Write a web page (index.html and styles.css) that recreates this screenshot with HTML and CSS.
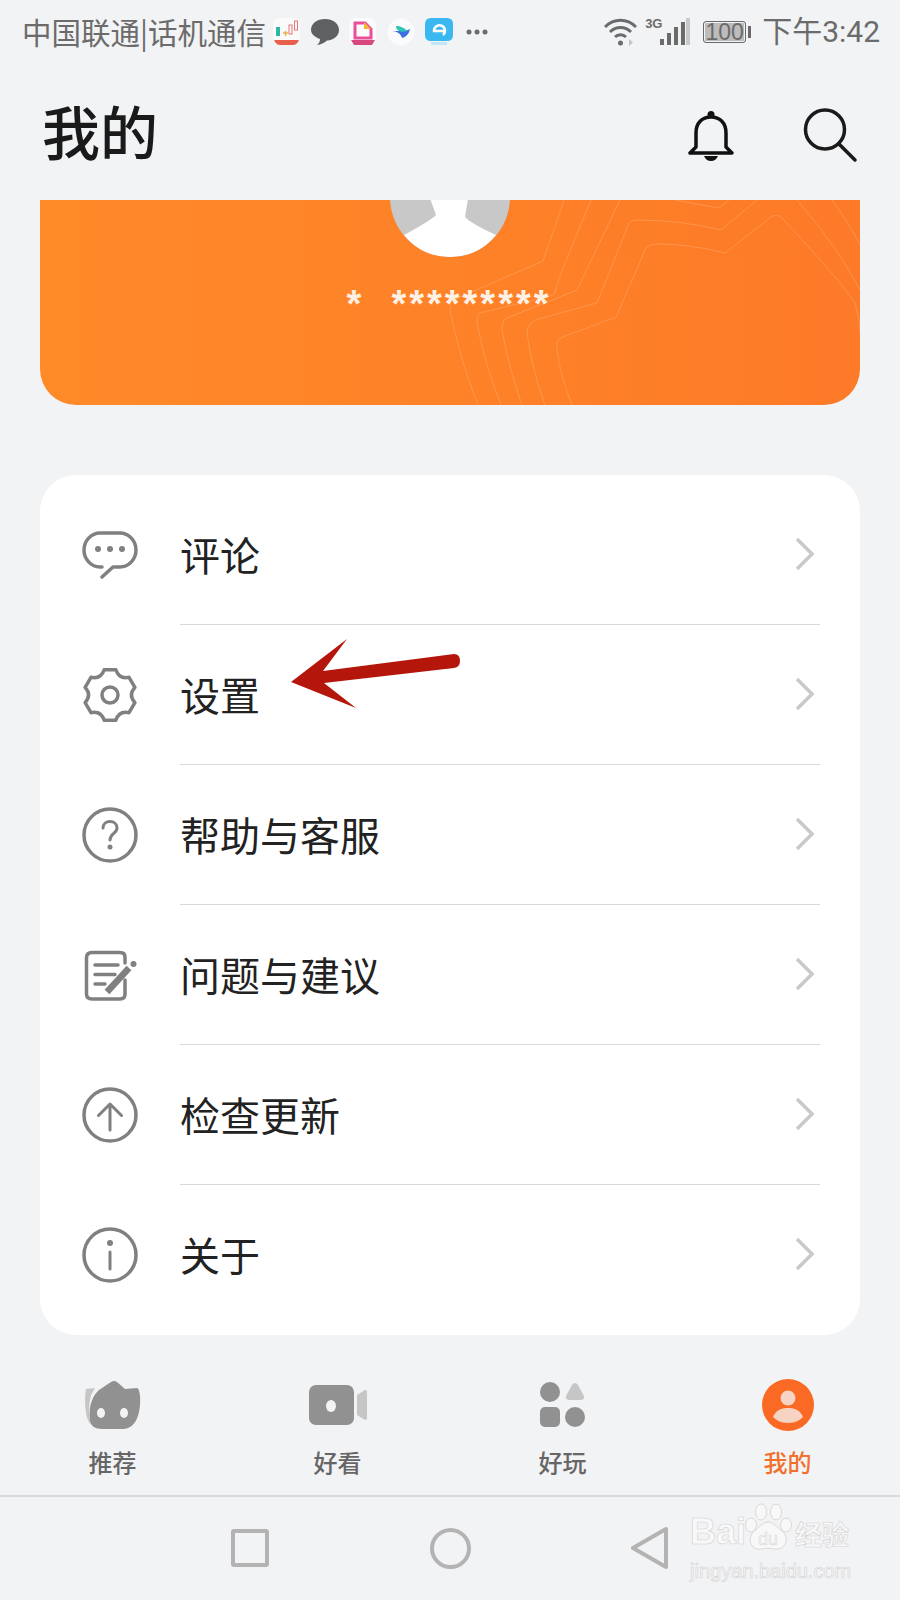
FILE: index.html
```html
<!DOCTYPE html>
<html lang="zh-CN">
<head>
    <meta charset="UTF-8">
    <title>我的</title>
    <link rel="stylesheet" href="styles.css">
</head>
<body>
<div class="page">

    <div class="status-bar">
        <span class="carrier">中国联通|话机通信</span>
        <div class="notify-icons">
            <svg width="28" height="28" viewBox="0 0 28 28"><rect width="27" height="27" rx="6" fill="#fafafa"/><rect x="3" y="9" width="4" height="9" fill="#2fb7a5"/><path d="M10 15h5M12.500 13v5" stroke="#e9b24c" stroke-width="1.500"/><rect x="16" y="7" width="3" height="9" fill="none" stroke="#e57878"/><rect x="21.500" y="3" width="3" height="9" fill="none" stroke="#e57878"/><path d="M1 22h25q-2 5-6 5H7q-4 0-6-5z" fill="#e8604c"/></svg>
            <svg width="28" height="28" viewBox="0 0 28 28"><path d="M14 1c8 0 14 4.500 14 11 0 6-5 10-12 10.500-3 2.500-6 4-10 4.500 2-1.500 3-3.500 3-6C3.500 19 0 16 0 12 0 5.500 6 1 14 1z" fill="#5f6062"/></svg>
            <svg width="28" height="28" viewBox="0 0 28 28"><rect width="27" height="27" rx="7" fill="#fbfbfb"/><path d="M6 5h10l6 6v9H6z" fill="none" stroke="#ea4f9a" stroke-width="3"/><path d="M15 4l7 7h-7z" fill="#f2b63a"/><path d="M2 22h24l-3 5H5z" fill="#d7487e"/></svg>
            <svg width="28" height="28" viewBox="0 0 28 28"><circle cx="14" cy="14" r="13.500" fill="#fbfbfb"/><path d="M5 13c5 0 9 3 10 7 4-1 7-4 8-9-4 2-7 2-9 2-3 0-6 0-9 0z" fill="#3c6fe0"/><path d="M9 8c4 0 9 2 11 5-3 1-6 1-8 0-2-1-3-3-3-5z" fill="#2ec4b6"/></svg>
            <svg width="28" height="28" viewBox="0 0 28 28"><path d="M6 0h16q6 0 6 6v11q0 6-6 6H6q-6 0-6-6V6q0-6 6-6z" fill="#3cb8f0"/><path d="M20 13h-11a5.500 5.500 0 1 1 9 4" fill="none" stroke="#fff" stroke-width="2.500"/><rect x="6" y="24" width="16" height="3" fill="#bfe6f8"/></svg>
            <svg class="more-dots" width="22" height="6" viewBox="0 0 22 6"><circle cx="3" cy="3" r="2.500"/><circle cx="11" cy="3" r="2.500"/><circle cx="19" cy="3" r="2.500"/></svg>
        </div>
        <div class="status-right">
            <svg width="33" height="29" viewBox="0 0 33 29" fill="none" stroke="#6b6b6b" stroke-width="3"><path d="M1 9c9-9 22-9 31 0"/><path d="M6 14c6-6 15-6 21 0"/><path d="M11 19c3-3 8-3 11 0"/><circle cx="16.500" cy="25" r="2.500" fill="#6b6b6b" stroke="none"/><path d="M25 21v7l4-3.500z" fill="#c4c4c4" stroke="none"/></svg>
            <span class="net-type">3G</span>
            <svg class="signal" width="30" height="28" viewBox="0 0 30 28"><rect x="0" y="21" width="4" height="6" fill="#6b6b6b"/><rect x="7" y="15" width="4" height="12" fill="#6b6b6b"/><rect x="14" y="9" width="4" height="18" fill="#6b6b6b"/><rect x="21" y="4" width="4" height="23" fill="#6b6b6b"/><rect x="26" y="0" width="4" height="27" fill="#c9c9c9"/></svg>
            <div class="battery"><span class="battery-body">100</span><i class="battery-cap"></i></div>
            <span class="clock">下午3:42</span>
        </div>
    </div>

    <div class="page-head">
        <h1>我的</h1>
        <div class="head-actions">
            <svg class="bell" width="46" height="52" viewBox="0 0 46 52" fill="none" stroke="#111" stroke-width="3.500"><path d="M2 43h42l-6-6V23C38 13 32 7 23 7S8 13 8 23v14z" stroke-linejoin="round"/><circle cx="23" cy="4.500" r="3.500" fill="#111" stroke="none"/><path d="M16 46h14q-2 5-7 5t-7-5z" fill="#111" stroke="none"/></svg>
            <svg width="56" height="56" viewBox="0 0 56 56" fill="none" stroke="#1a1a1a" stroke-width="3.500" stroke-linecap="round"><circle cx="22" cy="21.500" r="19.500"/><path d="M36 36l16 16"/></svg>
        </div>
    </div>

    <div class="profile-banner">
        <svg class="banner-lines" width="820" height="205" viewBox="0 0 820 205" fill="none" stroke="#ffb27a" stroke-width="1">
            <path d="M532 205Q520 175 517 150Q516 142 520 138L576 117L606 48Q610 44 616 44Q650 44 685 53L731 17Q737 13 742 18Q800 80 815 103Q820 118 820 133"/>
            <path d="M505 205Q492 170 487 133Q487 125 495 120L557 103L589 23Q592 20 597 20Q640 20 681 30L717 0"/>
            <path d="M482 205Q468 165 462 130Q462 120 467 118L537 90L580 0"/>
            <path d="M461 205Q445 165 437 123Q437 115 440 113L514 95L521 73L551 0"/>
            <path d="M438 205Q420 160 410 110Q410 102 413 100L503 61L524 0"/>
            <path d="M635 0L679 8L689 0"/>
            <path d="M757 0Q800 50 820 90"/>
            <path d="M792 0Q810 25 820 45"/>
        </svg>
        <svg class="avatar" width="120" height="120" viewBox="0 0 120 120"><circle cx="60" cy="60" r="60" fill="#c8c8c8"/><path d="M36 50L46 78Q40 84 14 98Q32 120 60 120Q88 120 106 98Q80 86 75 80L80 50z" fill="#fff"/></svg>
        <div class="account-name">*&nbsp;&nbsp;*********</div>
    </div>

    <div class="menu-card">
        <div class="menu-row">
            <div class="menu-icon"><svg width="56" height="48" viewBox="0 0 56 48" fill="none" stroke="#808080" stroke-width="3.500" stroke-linecap="round" stroke-linejoin="round"><path d="M20 36H18C9 36 2 28 2 19S9 2 18 2H38C47 2 54 10 54 19S47 36 38 36H31L20 46"/><circle cx="16" cy="18" r="3" fill="#808080" stroke="none"/><circle cx="28" cy="18" r="3" fill="#808080" stroke="none"/><circle cx="40" cy="18" r="3" fill="#808080" stroke="none"/></svg></div>
            <div class="menu-body"><span>评论</span><svg class="chevron" width="20" height="34" viewBox="0 0 20 34"><path d="M2 2l15 15L2 32"/></svg></div>
        </div>
        <div class="menu-row">
            <div class="menu-icon"><svg width="54" height="54" viewBox="0 0 54 54" fill="none" stroke="#808080" stroke-width="3.500" stroke-linejoin="round"><path d="M21.150 1.670H32.850Q36 11.400 46 9.300L51.900 19.400Q45 27 51.900 34.600L46 44.700Q36 42.600 32.850 52.300H21.150Q18 42.600 8 44.700L2.100 34.600Q9 27 2.100 19.400L8 9.300Q18 11.400 21.150 1.670Z"/><circle cx="27" cy="27" r="8"/></svg></div>
            <div class="menu-body"><span>设置</span><svg class="chevron" width="20" height="34" viewBox="0 0 20 34"><path d="M2 2l15 15L2 32"/></svg></div>
        </div>
        <div class="menu-row">
            <div class="menu-icon"><svg width="56" height="56" viewBox="0 0 56 56" fill="none" stroke="#808080" stroke-width="3.500" stroke-linecap="round"><circle cx="28" cy="28" r="26"/><path d="M21 21c0-4 3-6.500 7-6.500s7 2.500 7 6.500c0 5.500-7 5.500-7 12" stroke-width="3"/><circle cx="28" cy="40" r="2.500" fill="#808080" stroke="none"/></svg></div>
            <div class="menu-body"><span>帮助与客服</span><svg class="chevron" width="20" height="34" viewBox="0 0 20 34"><path d="M2 2l15 15L2 32"/></svg></div>
        </div>
        <div class="menu-row">
            <div class="menu-icon"><svg width="54" height="52" viewBox="0 0 54 52" fill="none" stroke="#808080" stroke-width="3.500" stroke-linecap="round" stroke-linejoin="round"><path d="M42 14V8Q42 3.500 37 3.500H9Q3.500 3.500 3.500 9V45Q3.500 50 9 50H37Q42 50 42 45V31"/><path d="M12 16H35M12 25.500H32M12 35H22"/><path d="M24 43L46 19" stroke-width="6.500" stroke-linecap="butt"/><circle cx="50.500" cy="15" r="3" fill="#808080" stroke="none"/></svg></div>
            <div class="menu-body"><span>问题与建议</span><svg class="chevron" width="20" height="34" viewBox="0 0 20 34"><path d="M2 2l15 15L2 32"/></svg></div>
        </div>
        <div class="menu-row">
            <div class="menu-icon"><svg width="56" height="56" viewBox="0 0 56 56" fill="none" stroke="#808080" stroke-width="3.500" stroke-linecap="round" stroke-linejoin="round"><circle cx="28" cy="28" r="26"/><path d="M28 43V17M16.500 28.500L28 17L39.500 28.500" stroke-width="3"/></svg></div>
            <div class="menu-body"><span>检查更新</span><svg class="chevron" width="20" height="34" viewBox="0 0 20 34"><path d="M2 2l15 15L2 32"/></svg></div>
        </div>
        <div class="menu-row">
            <div class="menu-icon"><svg width="56" height="56" viewBox="0 0 56 56" fill="none" stroke="#808080" stroke-width="3.500" stroke-linecap="round"><circle cx="28" cy="28" r="26"/><path d="M28 25v17" stroke-width="3"/><circle cx="28" cy="16" r="3" fill="#808080" stroke="none"/></svg></div>
            <div class="menu-body no-line"><span>关于</span><svg class="chevron" width="20" height="34" viewBox="0 0 20 34"><path d="M2 2l15 15L2 32"/></svg></div>
        </div>
    </div>

    <div class="tab-bar">
        <div class="tab">
            <div class="tab-icon"><svg width="56" height="48" viewBox="0 0 56 48"><path d="M1 8L10 7L6 14Q2 30 6 44C0 38-1 20 1 8Z" fill="#c6c6c6"/><path d="M5 40C3 25 8 12 17 7L26 1Q29-1 32 1L40 8L52 7Q54 7 55 15C56 28 53 48 38 48H17C10 48 6 45 5 40Z" fill="#919191"/><ellipse cx="16" cy="32" rx="4" ry="5" fill="#f2f3f5"/><ellipse cx="39" cy="32" rx="4" ry="5" fill="#f2f3f5"/></svg></div>
            <span>推荐</span>
        </div>
        <div class="tab">
            <div class="tab-icon"><svg width="58" height="40" viewBox="0 0 58 40"><rect x="0" y="0" width="45" height="40" rx="7" fill="#919191"/><path d="M48 10l8-5q2 0 2 2v26q0 2-2 2l-8-5z" fill="#c6c6c6"/><ellipse cx="22" cy="21" rx="5" ry="6" fill="#f2f3f5"/></svg></div>
            <span>好看</span>
        </div>
        <div class="tab">
            <div class="tab-icon"><svg width="46" height="46" viewBox="0 0 46 46"><circle cx="10" cy="10" r="10" fill="#919191"/><path d="M30 18q-5 0-4-4l6-11q3-4 6 0l6 11q1 4-4 4z" fill="#c6c6c6"/><rect x="0" y="25" width="20" height="20" rx="5" fill="#919191"/><circle cx="35" cy="35" r="10" fill="#919191"/></svg></div>
            <span>好玩</span>
        </div>
        <div class="tab tab-active">
            <div class="tab-icon"><svg width="52" height="52" viewBox="0 0 52 52"><circle cx="26" cy="26" r="26" fill="#fb6a24"/><circle cx="26" cy="19" r="7.500" fill="#f6d3c3"/><path d="M11 38c3-7 8-9 15-9s12 2 15 9c-3 3-8 6-15 6s-12-3-15-6z" fill="#f6d3c3"/></svg></div>
            <span>我的</span>
        </div>
    </div>

    <div class="nav-bar">
        <div class="nav-key"><span class="nav-square"></span></div>
        <div class="nav-key"><span class="nav-circle"></span></div>
        <div class="nav-key"><svg width="38" height="44" viewBox="0 0 38 44"><path d="M2 22L35 3v38z" fill="none" stroke="#b3b3b3" stroke-width="4" stroke-linejoin="round"/></svg></div>
    </div>

    <!-- red arrow drawn over the list -->
    <svg class="callout-arrow" width="175" height="75" viewBox="0 0 175 75"><path d="M5 45L61 2 37 34 168 17q6 0 6 7 0 6-6 7L38 46 70 71z" fill="#b5160c"/></svg>

    <!-- watermark -->
    <div class="watermark">
        <div class="mark-top">
            <span class="mark-bai">Bai</span>
            <svg class="mark-paw" width="48" height="50" viewBox="0 0 48 50"><ellipse cx="7" cy="22" rx="5.500" ry="7"/><ellipse cx="17" cy="9" rx="5.500" ry="8"/><ellipse cx="32" cy="9" rx="5.500" ry="8"/><ellipse cx="42" cy="22" rx="5.500" ry="7"/><path d="M24 19c6 0 8 5 14 9 8 6 4 20-8 18-4-1-8-1-12 0C6 48 3 35 10 28c6-4 8-9 14-9z"/><text class="mark-du" x="24" y="42">du</text></svg>
            <span class="mark-cn">经验</span>
        </div>
        <div class="mark-url">jingyan.baidu.com</div>
    </div>

</div>
</body>
</html>
```

FILE: styles.css
```css
html, body {
    margin: 0;
    padding: 0;
    background-color: #f2f3f5;
    font-family: "Noto Sans CJK SC", "Noto Sans", sans-serif;
}
.page {
    position: relative;
    width: 900px;
    height: 1600px;
    overflow: hidden;
}

/* status bar */
.status-bar {
    height: 64px;
    display: flex;
    align-items: center;
    padding: 0 20px 0 22px;
    color: #6b6b6b;
}
.carrier {
    font-size: 29.500px;
    line-height: 1;
    white-space: nowrap;
    width: 251px;
}
.notify-icons {
    display: flex;
    align-items: center;
    gap: 10px;
}
.more-dots {
    fill: #6b6b6b;
    margin-left: 3px;
}
.status-right {
    margin-left: auto;
    display: flex;
    align-items: center;
}
.net-type {
    font-family: "Liberation Sans", sans-serif;
    font-weight: bold;
    font-size: 13px;
    line-height: 1;
    margin: -18px 0 0 8px;
    width: 17px;
}
.signal {
    margin-left: -2px;
}
.battery {
    display: flex;
    align-items: center;
    margin-left: 13px;
}
.battery-body {
    width: 41px;
    height: 20px;
    border: 1.500px solid #6b6b6b;
    border-radius: 3px;
    background-color: #bcbcbc;
    font-family: "Liberation Sans", sans-serif;
    font-size: 23px;
    line-height: 20px;
    text-align: center;
    box-shadow: inset 0 0 0 1px #f2f3f5;
}
.battery-cap {
    width: 3px;
    height: 12px;
    background-color: #6b6b6b;
    margin-left: 2px;
}
.clock {
    font-size: 30px;
    line-height: 1;
    margin-left: 11px;
    white-space: nowrap;
    font-family: Roboto, "Noto Sans CJK SC", sans-serif;
}

/* title row */
.page-head {
    height: 136px;
    display: flex;
    align-items: center;
    justify-content: space-between;
    padding: 0 41px 0 42px;
}
.page-head h1 {
    margin: -4px 0 0 0;
    font-size: 58px;
    line-height: 1;
    font-weight: 500;
    color: #1a1a1a;
}
.head-actions {
    display: flex;
    align-items: center;
    gap: 69px;
    margin-top: 8px;
}

/* orange banner */
.profile-banner {
    position: relative;
    height: 205px;
    margin: 0 40px;
    border-radius: 0 0 36px 36px;
    overflow: hidden;
    background: linear-gradient(90deg, #ff8a28, #fd7a28);
}
.banner-lines {
    position: absolute;
    left: 0;
    top: 0;
    opacity: 0.45;
}
.avatar {
    position: absolute;
    left: 350px;
    top: -63px;
}
.account-name {
    position: relative;
    padding-top: 82px;
    margin-left: -2px;
    text-align: center;
    font-family: "Liberation Sans", sans-serif;
    font-weight: bold;
    font-size: 38px;
    line-height: 44px;
    letter-spacing: 3px;
    color: #fff0e4;
}

/* list */
.menu-card {
    margin: 70px 40px 0;
    height: 860px;
    box-sizing: border-box;
    padding: 10px 40px 0 0;
    background-color: #fff;
    border-radius: 36px;
}
.menu-row {
    display: flex;
    height: 140px;
}
.menu-icon {
    width: 140px;
    display: flex;
    align-items: center;
    justify-content: center;
    flex-shrink: 0;
}
.menu-body {
    flex: 1;
    display: flex;
    align-items: center;
    justify-content: space-between;
    border-bottom: 1px solid #d9d9d9;
    padding: 0 5px 2px 0;
    font-size: 40px;
    color: #222;
}
.menu-body.no-line {
    border-bottom: none;
}
.chevron {
    fill: none;
    stroke: #c9c9c9;
    stroke-width: 3.500;
}

/* bottom tabs */
.tab-bar {
    height: 160px;
    display: grid;
    grid-template-columns: repeat(4, 225px);
    border-bottom: 2px solid #d8dade;
    box-sizing: content-box;
}
.tab {
    display: flex;
    flex-direction: column;
    align-items: center;
    padding-top: 44px;
    font-size: 24px;
    font-weight: 500;
    line-height: 32px;
    color: #666;
}
.tab-icon {
    height: 52px;
    display: flex;
    align-items: center;
    margin-bottom: 15px;
}
.tab-active {
    color: #f0702c;
}

/* android keys */
.nav-bar {
    display: grid;
    grid-template-columns: repeat(3, 200px);
    justify-content: center;
    height: 102px;
}
.nav-key {
    display: flex;
    align-items: center;
    justify-content: center;
}
.nav-square {
    width: 30px;
    height: 30px;
    border: 4px solid #b3b3b3;
    border-radius: 3px;
}
.nav-circle {
    width: 33px;
    height: 33px;
    border: 4px solid #b3b3b3;
    border-radius: 50%;
}

/* overlays */
.callout-arrow {
    position: absolute;
    left: 286px;
    top: 637px;
}
.watermark {
    position: absolute;
    left: 690px;
    top: 1503px;
    width: 165px;
    color: #f8f8f9;
    -webkit-text-stroke: 0.600px #d2d2d2;
}
.mark-top {
    display: flex;
    align-items: flex-end;
    height: 50px;
}
.mark-bai {
    font-family: "Liberation Sans", sans-serif;
    font-weight: bold;
    font-size: 36px;
    line-height: 42px;
    width: 54px;
}
.mark-paw {
    fill: #f8f8f9;
    stroke: #d8d8d8;
    stroke-width: 1;
    flex-shrink: 0;
    margin-right: 3px;
}
.mark-du {
    font-family: "Liberation Sans", sans-serif;
    font-size: 18px;
    text-anchor: middle;
    stroke-width: 0.600;
}
.mark-cn {
    font-family: "Noto Sans CJK SC", sans-serif;
    font-size: 27px;
    line-height: 38px;
    font-weight: 700;
    white-space: nowrap;
}
.mark-url {
    font-family: "Liberation Sans", sans-serif;
    font-size: 20px;
    line-height: 20px;
    margin-top: 8px;
    white-space: nowrap;
}
```
